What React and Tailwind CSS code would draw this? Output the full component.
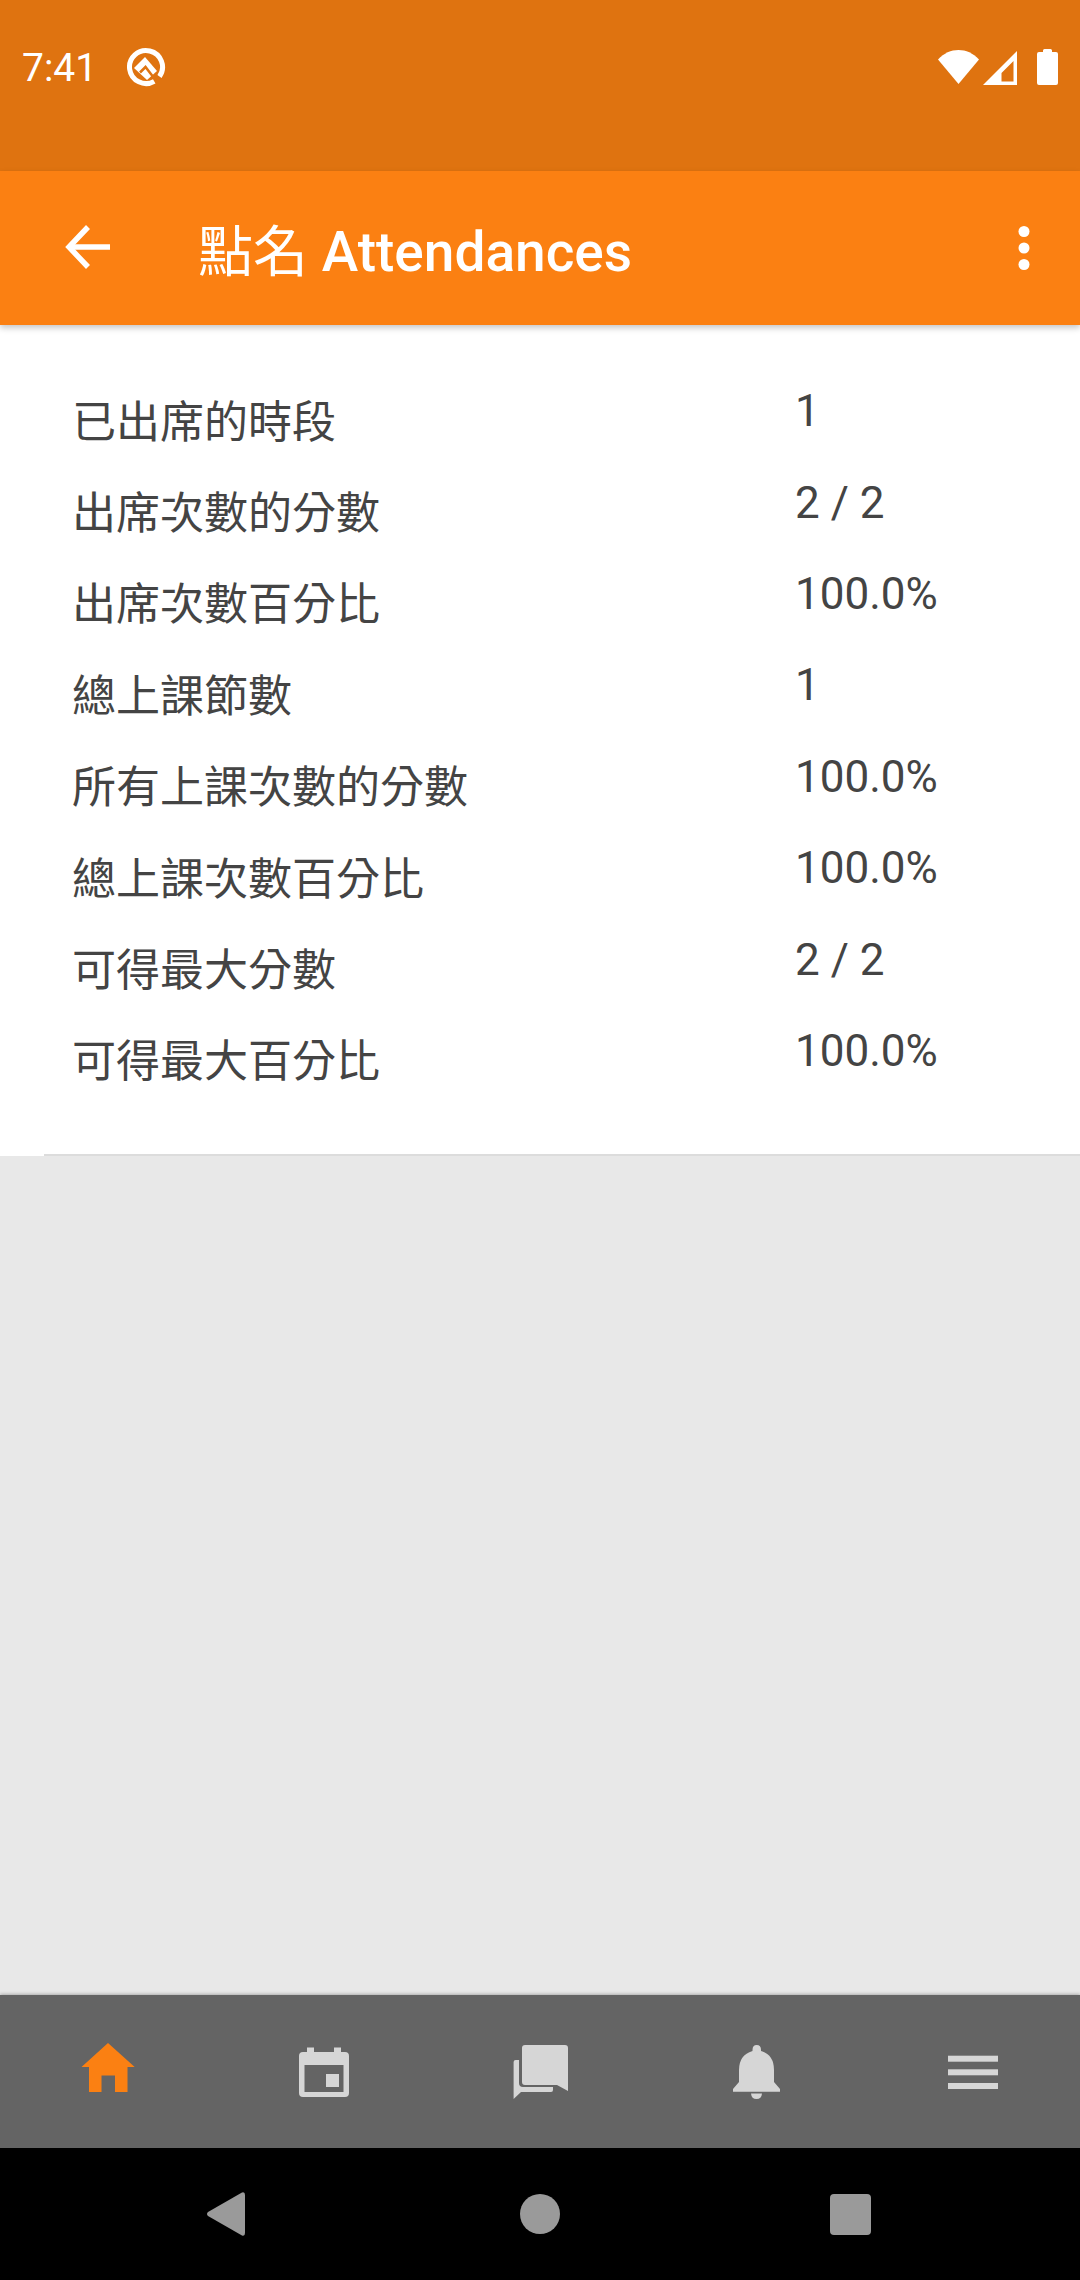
const rows = [
  ["已出席的時段", "1"],
  ["出席次數的分數", "2 / 2"],
  ["出席次數百分比", "100.0%"],
  ["總上課節數", "1"],
  ["所有上課次數的分數", "100.0%"],
  ["總上課次數百分比", "100.0%"],
  ["可得最大分數", "2 / 2"],
  ["可得最大百分比", "100.0%"],
];

const font = { fontFamily: '"Roboto","Noto Sans CJK TC",sans-serif' };

function NavIcon({ box, children, active }) {
  return (
    <div className="flex-1 flex items-center justify-center">
      <svg width="60" height="60" viewBox={box} fill={active ? "#fb8012" : "#d6d6d6"}>
        {children}
      </svg>
    </div>
  );
}

export default function App() {
  return (
    <div
      className="w-[1080px] h-[2280px] flex flex-col bg-[#e8e8e8] overflow-hidden"
      style={font}
    >
      <div className="h-[171px] shrink-0 bg-[#df7310] flex items-center justify-between pb-[37px] pl-[22px] text-white">
        <div className="flex items-center">
          <span className="text-[39px] leading-none w-[104px] mt-[3px]">7:41</span>
          <svg width="40" height="40" viewBox="0 0 40 40" fill="none">
            <path d="M28.250 34.300A16.500 16.500 0 1 1 33.500 29.500" stroke="#fff" strokeWidth="5" />
            <path d="M8 21L19 10L31 24L21 33Z" fill="#fff" />
            <path d="M14 25.500L19.500 20L28 31" stroke="#df7310" strokeWidth="2.500" fill="none" />
          </svg>
        </div>
        <svg width="144" height="44" viewBox="936 45 144 44" fill="#fff">
          <path d="M938 59.500C944 53 951 50 958.500 50C966 50 973 53 979 59.500L958.500 84Z" />
          <path fillRule="evenodd" d="M1017 51V85H983ZM1013.500 61L1001.500 73V81.500H1013.500Z" />
          <path d="M1043 52V50.500Q1043 49 1044.500 49H1050.500Q1052 49 1052 50.500V52H1056Q1058 52 1058 54V83Q1058 85 1056 85H1039Q1037 85 1037 83V54Q1037 52 1039 52Z" />
        </svg>
      </div>

      <div className="h-[154px] shrink-0 bg-[#fb8012] flex items-center relative z-10 shadow-[0_3px_6px_rgba(0,0,0,0.22)] text-white">
        <svg className="ml-[60px] mt-[-2px]" width="56" height="56" viewBox="60 219 56 56" fill="none" stroke="#fff" strokeWidth="5.500">
          <path d="M110 247H71" />
          <path d="M88 227L69 247L88 267" />
        </svg>
        <div className="ml-[82px] text-[55px] font-medium leading-none mt-[8px]">
          <span className="font-normal">點名</span> Attendances
        </div>
        <svg className="ml-auto mr-[40px] mt-[-2px]" width="32" height="56" viewBox="1008 219 32 56" fill="#fff">
          <circle cx="1024" cy="231.500" r="5.500" />
          <circle cx="1024" cy="248" r="5.500" />
          <circle cx="1024" cy="264.500" r="5.500" />
        </svg>
      </div>

      <div className="bg-white shrink-0 pl-[44px]">
        <div className="border-b-2 border-[#dcdcdc] pl-[28px] pt-[49px] pb-[49px] text-[#444444]">
          {rows.map(([label, value], i) => (
            <div key={i} className="h-[91.4px] flex items-center">
              <div className="w-[723px] text-[44px] leading-none pt-[6px]">{label}</div>
              <div className="text-[44px] leading-none pb-[17px]">{value}</div>
            </div>
          ))}
        </div>
      </div>

      <div className="flex-1" />

      <div className="h-[153px] shrink-0 bg-[#646464] flex shadow-[0_-1px_3px_rgba(0,0,0,0.25)]">
        <NavIcon box="78 2042 60 60" active>
          <path d="M108 2043L134.700 2067H127.500V2092H115V2075.500H101.500V2092H89V2067H81.500Z" />
        </NavIcon>
        <NavIcon box="294 2042 60 60">
          <path
            fillRule="evenodd"
            d="M307 2047.500H314V2052H334V2047.500H341V2052H345Q349 2052 349 2056V2093Q349 2097 345 2097H303Q299 2097 299 2093V2056Q299 2052 303 2052H307ZM304.500 2065V2092H343.500V2065Z"
          />
          <rect x="326" y="2074" width="13" height="13" />
        </NavIcon>
        <NavIcon box="510 2042 60 60">
          <path d="M525 2045H565Q568 2045 568 2048V2091L557 2085H525Q522 2085 522 2082V2048Q522 2045 525 2045Z" />
          <path d="M513.600 2062Q513.600 2060 515.600 2060H519V2083Q519 2087 523 2087H553V2090Q553 2092 551 2092H521L513.600 2099Z" />
        </NavIcon>
        <NavIcon box="726 2042 60 60">
          <path d="M756.700 2045Q761 2045 761 2050V2051Q774 2055 774 2070V2082L780 2089V2091.700H733V2089L739 2082V2070Q739 2055 752.500 2051V2050Q752.500 2045 756.700 2045Z" />
          <path d="M751 2093.500H762Q761.500 2099 756.500 2099Q751.500 2099 751 2093.500Z" />
        </NavIcon>
        <NavIcon box="942 2042 60 60">
          <rect x="948" y="2055.700" width="50" height="6" />
          <rect x="948" y="2069.300" width="50" height="6" />
          <rect x="948" y="2083" width="50" height="6" />
        </NavIcon>
      </div>

      <div className="h-[132px] shrink-0 bg-black flex items-center pl-[196px]">
        <svg width="60" height="60" viewBox="196 2184 60 60" fill="#9a9a9a">
          <path d="M242 2192.500Q245 2191.500 245 2195V2233Q245 2236.500 242 2235.500L208 2216Q206 2214 208 2212Z" />
        </svg>
        <svg className="ml-[254px]" width="60" height="60" viewBox="510 2184 60 60" fill="#9a9a9a">
          <circle cx="540" cy="2214" r="20" />
        </svg>
        <svg className="ml-[250px]" width="60" height="60" viewBox="820 2184 60 60" fill="#9a9a9a">
          <rect x="830" y="2194" width="41" height="41" rx="4" />
        </svg>
      </div>
    </div>
  );
}
